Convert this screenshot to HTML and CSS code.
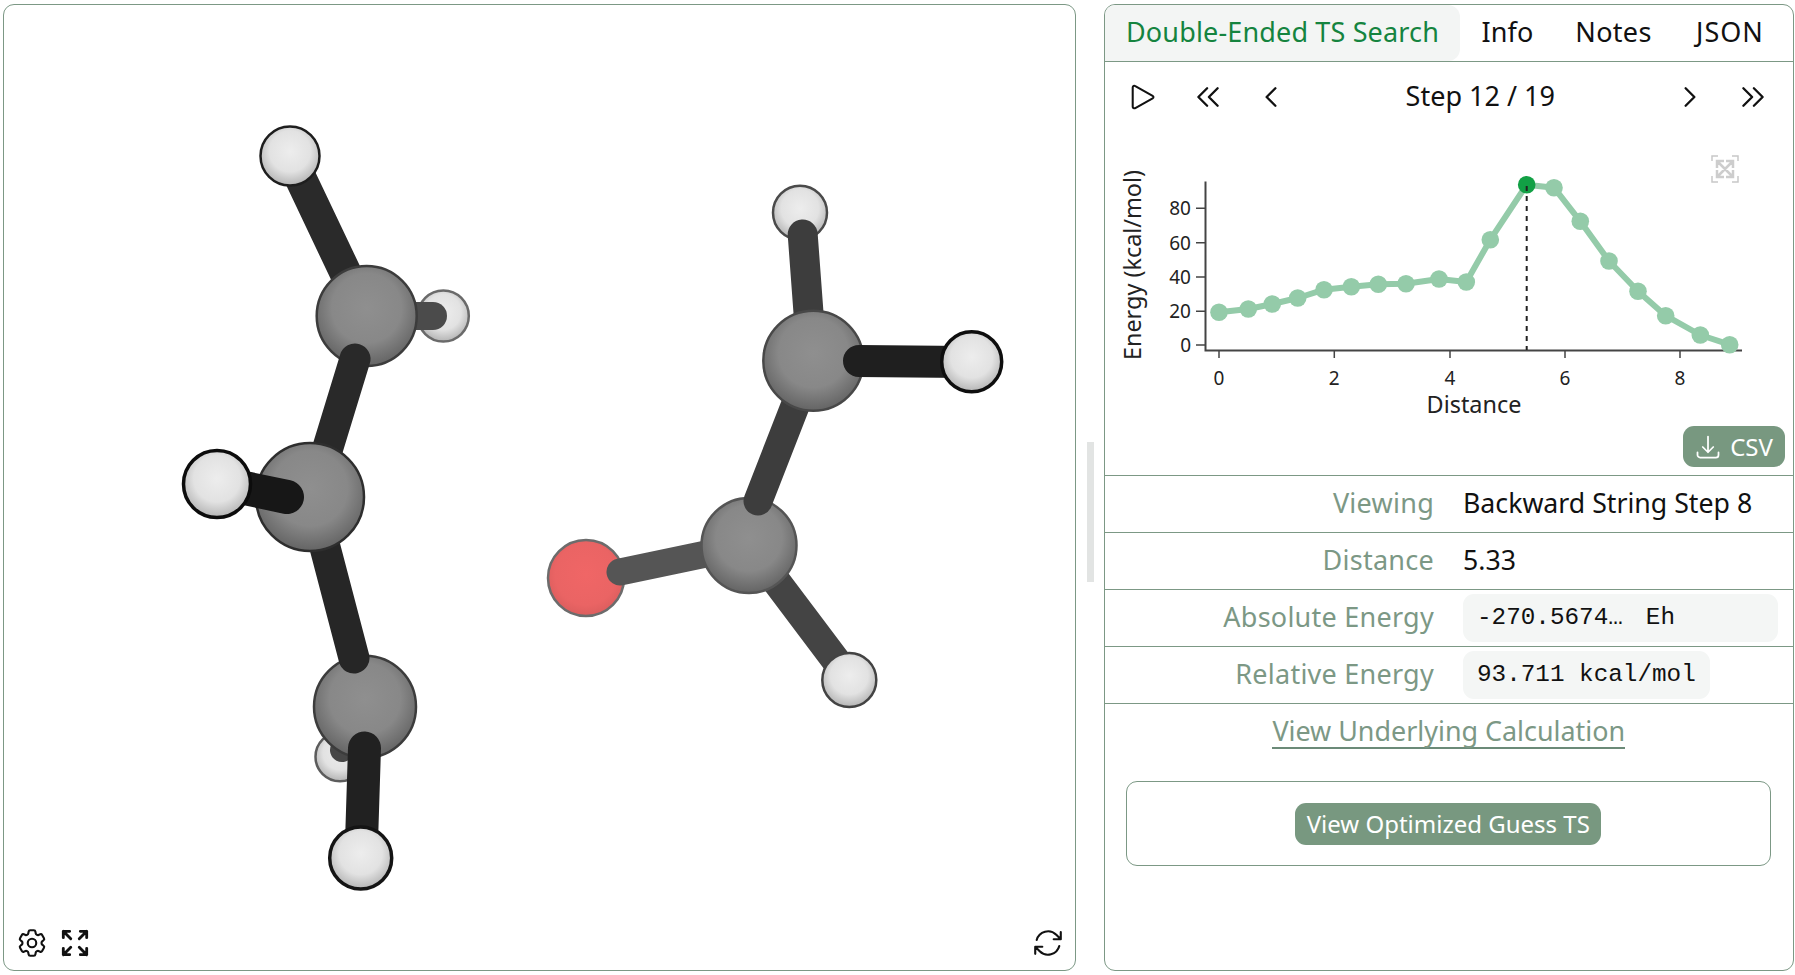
FILE: index.html
```html
<!DOCTYPE html>
<html lang="en">
<head>
<meta charset="utf-8">
<title>Double-Ended TS Search</title>
<link rel="stylesheet" href="styles.css">
</head>
<body>
<main class="layout">
  <section class="viewer">
    <svg class="molecule" viewBox="3 4 1073 967" aria-label="Molecule">
      <defs>
        <radialGradient id="gc" cx="0.5" cy="0.42" r="0.58">
          <stop offset="0" stop-color="#8f8f8f"/><stop offset="0.6" stop-color="#888"/><stop offset="1" stop-color="#646464"/>
        </radialGradient>
        <radialGradient id="gh" cx="0.5" cy="0.42" r="0.58">
          <stop offset="0" stop-color="#ededed"/><stop offset="0.6" stop-color="#e2e2e2"/><stop offset="1" stop-color="#b4b4b4"/>
        </radialGradient>
        <radialGradient id="go" cx="0.5" cy="0.45" r="0.58">
          <stop offset="0" stop-color="#f06666"/><stop offset="0.7" stop-color="#ea6464"/><stop offset="1" stop-color="#d85c5c"/>
        </radialGradient>
      </defs>
      <!-- left molecule -->
      <circle class="atom h" cx="443.3" cy="316" r="25.5" stroke="#6a6a6a"/>
      <line class="bond" x1="366" y1="316" x2="433" y2="316" stroke="#4b4b4b" stroke-width="28"/>
      <line class="bond" x1="290" y1="156" x2="366" y2="316" stroke="#2a2a2a" stroke-width="32"/>
      <circle class="atom h" cx="290" cy="156" r="29.5" stroke="#1e1e1e"/>
      <circle class="atom c" cx="366.7" cy="316" r="50" stroke="#3c3c3c"/>
      <line class="bond" x1="355" y1="359" x2="318" y2="480" stroke="#292929" stroke-width="31"/>
      <circle class="atom h" cx="340" cy="756.7" r="24.5" stroke="#5c5c5c"/>
      <line class="bond" x1="365" y1="706" x2="342" y2="750" stroke="#474747" stroke-width="24"/>
      <circle class="atom c" cx="365" cy="706.7" r="51" stroke="#3c3c3c"/>
      <line class="bond" x1="310" y1="490" x2="354" y2="658" stroke="#262626" stroke-width="31"/>
      <circle class="atom c" cx="310" cy="497" r="54" stroke="#2e2e2e"/>
      <line class="bond" x1="216" y1="482" x2="287" y2="497" stroke="#171717" stroke-width="34"/>
      <circle class="atom h near" cx="217" cy="484" r="33.5" stroke="#0c0c0c"/>
      <line class="bond" x1="364.5" y1="748" x2="361" y2="858" stroke="#212121" stroke-width="33"/>
      <circle class="atom h near" cx="360.7" cy="858" r="31" stroke="#141414"/>
      <!-- right molecule -->
      <circle class="atom o" cx="586" cy="578" r="38" stroke="#6c6c6c"/>
      <line class="bond" x1="620" y1="572" x2="749" y2="545" stroke="#555" stroke-width="27"/>
      <line class="bond" x1="749" y1="545" x2="840" y2="666" stroke="#444" stroke-width="29"/>
      <circle class="atom h" cx="849.3" cy="680" r="27" stroke="#434343"/>
      <circle class="atom c" cx="749" cy="545.5" r="47.5" stroke="#555"/>
      <line class="bond" x1="813" y1="360" x2="758" y2="501" stroke="#3d3d3d" stroke-width="29"/>
      <circle class="atom h" cx="800" cy="212.7" r="27" stroke="#4a4a4a"/>
      <line class="bond" x1="802.7" y1="234.5" x2="812" y2="360" stroke="#3d3d3d" stroke-width="30"/>
      <circle class="atom c" cx="813.3" cy="360.7" r="50" stroke="#484848"/>
      <line class="bond" x1="859" y1="361" x2="965" y2="362" stroke="#1f1f1f" stroke-width="32"/>
      <circle class="atom h near" cx="971.7" cy="361.8" r="30" stroke="#0e0e0e"/>
    </svg>
    <div class="viewer-tools-left">
      <button class="tool" aria-label="Settings">
        <svg class="icon icon-34" viewBox="0 0 24 24"><path d="M9.594 3.94c.09-.542.56-.94 1.11-.94h2.593c.55 0 1.02.398 1.11.94l.213 1.281c.063.374.313.686.645.87.074.04.147.083.22.127.325.196.72.257 1.075.124l1.217-.456a1.125 1.125 0 0 1 1.37.49l1.296 2.247a1.125 1.125 0 0 1-.26 1.431l-1.003.827c-.293.241-.438.613-.43.992a7.723 7.723 0 0 1 0 .255c-.008.378.137.75.43.991l1.004.827c.424.35.534.955.26 1.43l-1.298 2.247a1.125 1.125 0 0 1-1.369.491l-1.217-.456c-.355-.133-.75-.072-1.076.124a6.47 6.47 0 0 1-.22.128c-.331.183-.581.495-.644.869l-.213 1.281c-.09.543-.56.94-1.11.94h-2.594c-.55 0-1.019-.398-1.11-.94l-.213-1.281c-.062-.374-.312-.686-.644-.87a6.52 6.52 0 0 1-.22-.127c-.325-.196-.72-.257-1.076-.124l-1.217.456a1.125 1.125 0 0 1-1.369-.49l-1.297-2.247a1.125 1.125 0 0 1 .26-1.431l1.004-.827c.292-.24.437-.613.43-.991a6.932 6.932 0 0 1 0-.255c.007-.38-.138-.751-.43-.992l-1.004-.827a1.125 1.125 0 0 1-.26-1.43l1.297-2.247a1.125 1.125 0 0 1 1.37-.491l1.216.456c.356.133.751.072 1.076-.124.072-.044.146-.086.22-.128.332-.183.582-.495.644-.869l.214-1.28Z"/><path d="M15 12a3 3 0 1 1-6 0 3 3 0 0 1 6 0Z"/></svg>
      </button>
      <button class="tool" aria-label="Fullscreen">
        <svg class="icon icon-34 bold" viewBox="0 0 24 24"><path d="M3.75 3.75v4.5m0-4.5h4.5m-4.5 0L9 9M3.75 20.25v-4.5m0 4.5h4.5m-4.5 0L9 15M20.25 3.75h-4.5m4.5 0v4.5m0-4.5L15 9m5.25 11.25h-4.5m4.5 0v-4.5m0 4.5L15 15"/></svg>
      </button>
    </div>
    <button class="tool viewer-tools-right" aria-label="Reset view">
      <svg class="icon icon-34" viewBox="0 0 24 24"><path d="M16.023 9.348h4.992v-.001M2.985 19.644v-4.992m0 0h4.992m-4.993 0 3.181 3.183a8.25 8.25 0 0 0 13.803-3.7M4.031 9.865a8.25 8.25 0 0 1 13.803-3.7l3.181 3.182m0-4.991v4.99"/></svg>
    </button>
  </section>

  <div class="splitter"><span class="splitter-handle"></span></div>

  <section class="panel">
    <nav class="tabs">
      <button class="tab active">Double-Ended TS Search</button>
      <button class="tab tab-info">Info</button>
      <button class="tab tab-notes">Notes</button>
      <button class="tab tab-json">JSON</button>
    </nav>

    <div class="controls">
      <button class="ctrl ctrl-play" aria-label="Play"><svg class="icon icon-play" viewBox="0 0 24 24"><path d="M2.5 3.2c0-1.3 1.4-2 2.4-1.3l16 9c1 .6 1 1.7 0 2.3l-16 9c-1 .6-2.4-.1-2.4-1.3V3.2Z"/></svg></button>
      <button class="ctrl" aria-label="First"><svg class="icon icon-28 bold" viewBox="0 0 24 24"><path d="M11.25 4.5l-7.5 7.5 7.5 7.5m9-15l-7.5 7.5 7.5 7.5"/></svg></button>
      <button class="ctrl" aria-label="Previous"><svg class="icon icon-28 bold" viewBox="0 0 24 24"><path d="M15.75 19.5 8.25 12l7.5-7.5"/></svg></button>
      <span class="step">Step 12 / 19</span>
      <button class="ctrl" aria-label="Next"><svg class="icon icon-28 bold" viewBox="0 0 24 24"><path d="M8.25 4.5l7.5 7.5-7.5 7.5"/></svg></button>
      <button class="ctrl" aria-label="Last"><svg class="icon icon-28 bold" viewBox="0 0 24 24"><path d="M3.75 4.5l7.5 7.5-7.5 7.5m9-15l7.5 7.5-7.5 7.5"/></svg></button>
    </div>

    <svg class="chart" viewBox="1105 132 688 294" aria-label="Energy profile">
      <g class="zoom-icon">
        <path class="zoom-corners" d="M1712 161v-5h6M1732 156h6v5M1712 176v6h6M1732 182h6v-6"/>
        <path class="zoom-x" d="M1717 161 1733 177M1733 161 1717 177M1717 168v-7h7M1726 161h7v7M1717 170v7h7M1733 170v7h-7"/>
      </g>
      <g class="axis">
        <path d="M1205.5 181.5V350.5H1742"/>
        <path class="tick" d="M1196 208.3h9M1196 242.7h9M1196 277h9M1196 311.3h9M1196 345h9M1219 350v8M1334.3 350v8M1450 350v8M1565 350v8M1680 350v8"/>
      </g>
      <g class="ylabels">
        <text x="1191" y="215">80</text>
        <text x="1191" y="249.5">60</text>
        <text x="1191" y="283.5">40</text>
        <text x="1191" y="318">20</text>
        <text x="1191" y="351.5">0</text>
      </g>
      <g class="xlabels">
        <text x="1219" y="384.5">0</text>
        <text x="1334.3" y="384.5">2</text>
        <text x="1450" y="384.5">4</text>
        <text x="1565" y="384.5">6</text>
        <text x="1680" y="384.5">8</text>
      </g>
      <text class="axis-title" x="1474" y="413">Distance</text>
      <text class="axis-title" transform="translate(1141 265) rotate(-90)">Energy (kcal/mol)</text>
      <polyline class="series" points="1219,312.3 1248.3,309 1272.3,304 1297.7,298 1324,289.7 1351.3,286.7 1378.3,284.3 1406,283.7 1439,279 1466.3,282 1490.3,239.7 1526.7,184.7 1554,187.7 1580.3,221.3 1609,261 1638,291.3 1665.7,315.7 1700.3,335 1729.7,344.7"/>
      <g class="points">
        <circle cx="1219" cy="312.3" r="8.8"/><circle cx="1248.3" cy="309" r="8.8"/><circle cx="1272.3" cy="304" r="8.8"/><circle cx="1297.7" cy="298" r="8.8"/><circle cx="1324" cy="289.7" r="8.8"/><circle cx="1351.3" cy="286.7" r="8.8"/><circle cx="1378.3" cy="284.3" r="8.8"/><circle cx="1406" cy="283.7" r="8.8"/><circle cx="1439" cy="279" r="8.8"/><circle cx="1466.3" cy="282" r="8.8"/><circle cx="1490.3" cy="239.7" r="8.8"/><circle cx="1554" cy="187.7" r="8.8"/><circle cx="1580.3" cy="221.3" r="8.8"/><circle cx="1609" cy="261" r="8.8"/><circle cx="1638" cy="291.3" r="8.8"/><circle cx="1665.7" cy="315.7" r="8.8"/><circle cx="1700.3" cy="335" r="8.8"/><circle cx="1729.7" cy="344.7" r="8.8"/>
      </g>
      <circle class="point-active" cx="1526.7" cy="184.7" r="8.8"/>
      <line class="marker" x1="1526.7" y1="186" x2="1526.7" y2="350"/>
    </svg>

    <div class="csv-row">
      <button class="csv"><svg class="icon icon-csv" viewBox="0 0 24 24"><path d="M3 16.5v2.25A2.25 2.25 0 0 0 5.25 21h13.5A2.25 2.25 0 0 0 21 18.75V16.5M16.5 12 12 16.5m0 0L7.5 12m4.5 4.5V3"/></svg>CSV</button>
    </div>

    <dl class="rows">
      <div class="row"><dt>Viewing</dt><dd>Backward String Step 8</dd></div>
      <div class="row"><dt>Distance</dt><dd>5.33</dd></div>
      <div class="row"><dt>Absolute Energy</dt><dd class="dd-code"><code class="code code-wide">-270.5674…<span class="unit">Eh</span></code></dd></div>
      <div class="row"><dt>Relative Energy</dt><dd class="dd-code"><code class="code">93.711 kcal/mol</code></dd></div>
    </dl>

    <div class="link-row"><a class="link" href="#">View Underlying Calculation</a></div>

    <div class="card"><button class="primary">View Optimized Guess TS</button></div>
  </section>
</main>
</body>
</html>
```

FILE: styles.css
```css
* { box-sizing: border-box; }
html, body { margin: 0; height: 100%; background: #fff; }
body { font-family: "Noto Sans", "Open Sans", sans-serif; color: #111; overflow: hidden; }
button { font: inherit; color: inherit; background: none; border: 0; padding: 0; cursor: pointer; }

.layout { display: flex; height: 975px; padding: 4px 1.5px 4px 3px; }

.viewer { position: relative; width: 1073px; border: 1px solid #7c9885; border-radius: 11px; overflow: hidden; }
.molecule { display: block; width: 1073px; height: 967px; margin: -1px; }
.atom { stroke-width: 2.5; }
.atom.near { stroke-width: 3.5; }
.atom.c { fill: url(#gc); }
.atom.h { fill: url(#gh); }
.atom.o { fill: url(#go); }
.bond { stroke-linecap: round; }

.icon { fill: none; stroke: #111; stroke-width: 1.5; stroke-linecap: round; stroke-linejoin: round; display: block; }
.icon-28 { width: 28px; height: 28px; }
.icon-34 { width: 34px; height: 34px; }
.bold { stroke-width: 2; }
.tool { display: flex; }
.viewer-tools-left { position: absolute; left: 11px; top: 921px; display: flex; gap: 9px; }
.viewer-tools-right { position: absolute; left: 1027px; top: 921px; }

.splitter { width: 28px; display: flex; align-items: center; justify-content: center; padding-top: 48px; }
.splitter-handle { display: block; width: 7px; height: 140px; background: #e2e4e3; }

.panel { flex: 1; border: 1px solid #7c9885; border-radius: 11px; overflow: hidden; display: flex; flex-direction: column; }

.tabs { display: flex; height: 57px; border-bottom: 1px solid #7c9885; flex: none; }
.tab { font-size: 27px; letter-spacing: 0.15px; height: 56px; padding: 0 0 4px; white-space: nowrap; text-align: center; }
.tab.active { background: #f3f5f4; color: #15843f; border-radius: 0 12px 12px 0; width: 355px; }
.tab-info { width: 95px; }
.tab-notes { width: 117px; letter-spacing: 0.3px; }
.tab-json { width: 116px; letter-spacing: 1px; }

.controls { display: flex; align-items: center; height: 70px; flex: none; padding: 0 8px 0 6px; }
.ctrl { width: 63px; height: 48px; display: flex; align-items: center; justify-content: center; flex: none; }
.ctrl-play { margin-right: 2px; }
.icon-play { width: 26px; height: 26px; stroke-width: 1.9; }
.step { flex: 1; text-align: center; font-size: 27px; padding-bottom: 3px; }

.chart { display: block; width: 688px; height: 294px; flex: none; }
.axis path { fill: none; stroke: #444; stroke-width: 2; }
.axis .tick { stroke-width: 1.5; }
.ylabels text, .xlabels text { font-size: 19px; fill: #222; }
.ylabels text { text-anchor: end; }
.xlabels text { text-anchor: middle; }
.axis-title { font-size: 23.4px; fill: #222; text-anchor: middle; }
.series { fill: none; stroke: #94cba9; stroke-width: 6; stroke-linejoin: round; }
.points circle { fill: #94cba9; }
.point-active { fill: #12a045; }
.marker { stroke: #222; stroke-width: 2; stroke-dasharray: 5 5; }
.zoom-corners { fill: none; stroke: #c8c8c8; stroke-width: 1.5; }
.zoom-x { fill: none; stroke: #cdcdcd; stroke-width: 2.5; }

.csv-row { display: flex; justify-content: flex-end; padding-right: 8px; height: 49px; flex: none; }
.csv { display: flex; align-items: center; gap: 8px; width: 102px; height: 41px; border-radius: 11px; background: #789880; color: #fff; font-size: 24px; justify-content: center; }
.icon-csv { width: 28px; height: 28px; stroke: #fff; }

.rows { margin: 0; flex: none; }
.row { display: flex; align-items: center; height: 57px; border-top: 1px solid #7c9885; font-size: 26.7px; }
.rows .row:last-child { border-bottom: 1px solid #7c9885; height: 58px; }
.row dt { width: 329px; text-align: right; color: #7c9885; flex: none; font-size: 27px; letter-spacing: 0.25px; padding-bottom: 4px; }
.row dd { margin: 0 0 0 29px; flex: 1; padding-bottom: 4px; }
.row .dd-code { padding-bottom: 0; }
.code { display: inline-block; font-family: "Liberation Mono", monospace; font-size: 24.3px; line-height: 48px; height: 48px; padding: 0 14px; border-radius: 11px; background: #f4f6f5; color: #111; vertical-align: top; }
.code-wide { width: 315px; }
.unit { margin-left: 23px; }

.link-row { display: flex; justify-content: center; padding-top: 10px; flex: none; }
.link { font-size: 26.9px; color: #7c9885; text-decoration: none; border-bottom: 2px solid #6b8a78; line-height: 33px; }

.card { margin: 32px 22px 0 21px; height: 85px; border: 1px solid #7c9885; border-radius: 11px; display: flex; align-items: center; justify-content: center; flex: none; }
.primary { background: #789880; color: #fff; font-size: 24px; height: 42px; width: 306px; border-radius: 11px; }
```
